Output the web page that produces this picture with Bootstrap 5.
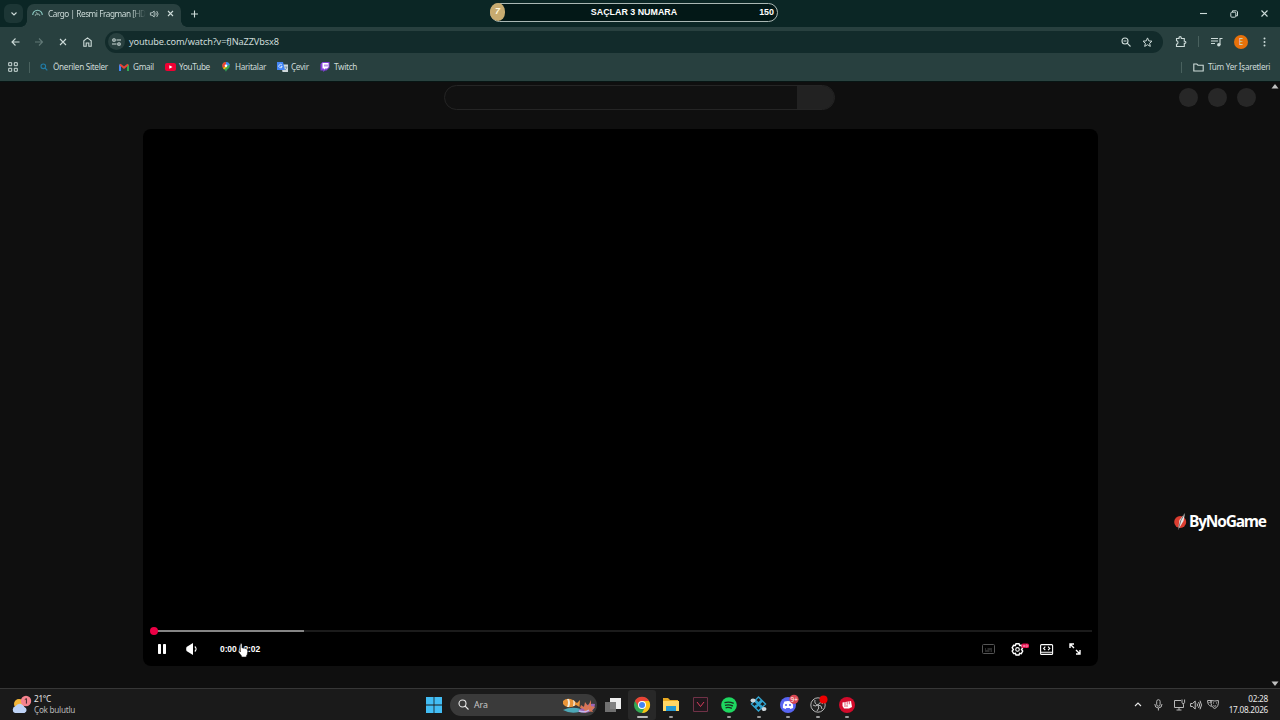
<!DOCTYPE html>
<html lang="tr">
<head>
<meta charset="utf-8">
<title>Cargo | Resmi Fragman [HD]</title>
<link href="https://cdn.jsdelivr.net/npm/bootstrap@5.3.0/dist/css/bootstrap.min.css" rel="stylesheet">
<script src="https://cdn.jsdelivr.net/npm/bootstrap@5.3.0/dist/js/bootstrap.bundle.min.js"></script>
<style>
body{width:1280px;height:720px;background:#0f0f0f;font:8.2px/12px "Noto Sans","Open Sans",sans-serif;color:#cddbd9;fill:none;stroke:currentColor;stroke-width:1.1}
svg{display:block;overflow:visible}
.f{fill:currentColor;stroke:none}
.tracks{display:grid;align-items:center}
.tabstrip{height:27px;background:#0b2625;grid-template-columns:4px 19px 4px 154px 9px 1fr 9px 21px 9px 22px 8px 11px}
.tabsearch{width:19px;height:19px;border-radius:6px;background:#1c3635}
.tab{height:23px;padding-bottom:4px;background:#28403f;border-radius:7px 7px 0 0;grid-template-columns:5px 11px 5px 98px 4px 9px 9px 6px;align-self:end}
.tab:before,.tab:after{content:"";position:absolute;bottom:0;width:6px;height:6px}
.tab:before{left:-6px;background:radial-gradient(circle at 0 0,transparent 5.5px,#28403f 6px)}
.tab:after{right:-6px;background:radial-gradient(circle at 100% 0,transparent 5.5px,#28403f 6px)}
.tabtitle{letter-spacing:-.44px;-webkit-mask:linear-gradient(90deg,#000 85%,transparent);mask:linear-gradient(90deg,#000 85%,transparent)}
.toolbar{height:29px;background:#28403f;grid-template-columns:10px 10px 14px 10px 15px 8px 16px 10px 12px 1058px 12px 12px 11px 1px 12px 12px 11px 14px 15px 4px}
.omni{height:22px;border-radius:11px;background:#122b2b;grid-template-columns:3px 16px 5px 1fr 10px 11px 11px 10px}
.siteinfo{width:17px;height:17px;background:#28403f}
.url{font-size:9.2px;letter-spacing:-.13px}
.bookmarks{height:25px;padding-bottom:2px;letter-spacing:-.31px;background:#28403f;grid-template-columns:8px 10px 11px 1px 10px 8px 5px 66px 10px 4px 32px 10px 4px 43px 8px 5px 42px 10px 4px 29px 10px 4px 1fr 1px 11px 11px 4px 72px;border-bottom:1px solid #29423f}
.vline{width:1px;height:11px;background:#49615e}
.banner{left:490px;top:3px;width:288px;height:19px;border:1.5px solid #aab8b4;border-radius:10px;background:#031817;color:#fff;font:bold 8.9px/17px "Liberation Sans",sans-serif}
.coin{left:-1px;top:-1px;width:15px;height:18px;border-radius:9px 50% 50% 9px;background:#c7ab70;color:#fff8dd}
.page{height:607px;background:#0f0f0f;border-top:1px solid #071514}
.masthead{height:30px;grid-template-columns:444px 391px 1fr 19px 10px 19px 10px 19px 24.5px}
.query{height:25px;border:1px solid #252525;border-radius:13px;background:#111;overflow:hidden}
.querybtn{width:37px;background:#222}
.dot{width:19px;height:19px;background:#272727}
.player{width:955px;height:537px;margin:17px 0 0 143px;background:#000;border-radius:8px;color:#fff}
.seek{height:2px;margin:0 6px 0 10px;background:#1b1b1b}
.loaded{width:151px;height:2px;background:#858585}
.knob{left:-3.5px;top:-3px;width:8px;height:8px;background:#ec0045}
.controls{height:34px;grid-template-columns:15px 8px 20px 12px 22px 1fr 13px 16px 14px 15px 13px 16px 11px 18px}
.time{font:bold 8.5px/12px "Liberation Sans",sans-serif;letter-spacing:-.1px}
.cursor{left:94.5px;top:514px}
.logo{left:1173px;top:511px}
.brand{font:bold 15.5px/20px "Open Sans",sans-serif;color:#fff;letter-spacing:-1.2px;margin-left:1px}
.taskbar{height:32px;background:#1a1a1a;border-top:1px solid #373737;color:#e8e8e8;grid-template-columns:12px 17px 5px 392px 16px 8px 147px 8px 17px 6px 234px 1fr 8px 12px 9px 11px 11px 5px 12px 5px 12px 6px 43px 12px}
.small-lines{line-height:10.5px;letter-spacing:-.27px}
.clock{line-height:10.5px;letter-spacing:-.25px}
.find{height:22px;border-radius:11px;background:#3a3a3a}
.apps{grid-template-columns:28px repeat(7,29.4px)}
.app{height:30px}
.app.on{background:#282828;border-radius:3px}
.app.live:after{content:"";position:absolute;bottom:2px;left:50%;width:4px;height:2px;margin-left:-2px;border-radius:1px;background:#9c9c9c}
.app.on:after{width:11px;margin-left:-5px;background:#bbb}
</style>
</head>
<body class="overflow-hidden position-relative">
<header>
<div class="tabstrip tracks">
 <i></i><div class="tabsearch d-flex align-items-center justify-content-center"><svg width="6" height="4" viewBox="0 0 6 4"><path d="M.5.5 3 3 5.5.5"/></svg></div><i></i>
 <div class="tab tracks position-relative"><i></i>
  <svg width="11" height="11" viewBox="0 0 11 11"><path d="M.7 7A4.8 4.8 0 0 1 10.3 7" stroke="#8bc9c2"/><path d="M3.2 8a2.3 2.3 0 1 1 4.6 0M4 4l2 3" stroke="#7e9995"/></svg><i></i>
  <span class="tabtitle text-nowrap overflow-hidden">Cargo | Resmi Fragman [HD]</span><i></i>
  <svg width="9" height="8" viewBox="0 0 9 8" stroke-width=".8"><path d="M.4 2.8h1.6L4.2 1v6L2 5.2H.4z"/><path d="M5.7 2.5q1.2 1.5 0 3M6.7 1q2.8 3 0 6"/></svg><i></i>
  <svg width="5" height="5" viewBox="0 0 5 5"><path d="m0 0 5 5M5 0 0 5"/></svg>
 </div><i></i>
 <svg width="8" height="8" viewBox="0 0 8 8"><path d="M4.5.5v7M1 4h7"/></svg>
 <svg width="7" height="7" viewBox="0 0 7 7"><path d="M0 3.5h7"/></svg><i></i>
 <svg width="8" height="8" viewBox="0 0 8 8" stroke-width="1"><rect x=".8" y="2.2" width="5" height="5" rx="1"/><path d="M2.5 2V.8h4l1 1v4H6"/></svg><i></i>
 <svg width="7" height="7" viewBox="0 0 7 7"><path d="m.5.5 6 6m0-6-6 6"/></svg><i></i>
</div>
<div class="toolbar tracks"><i></i>
 <svg width="10" height="8" viewBox="0 0 10 8"><path d="M9.5 4h-7M5.5.5 2 4l3.5 3.5"/></svg><i></i>
 <svg width="10" height="8" viewBox="0 0 10 8" color="#617876"><path d="M1 4h7M5 .5 8.5 4 5 7.5"/></svg><i></i>
 <svg width="8" height="8" viewBox="0 0 8 8"><path d="m1 1 6 6m0-6L1 7"/></svg><i></i>
 <svg width="9" height="10" viewBox="0 0 9 10"><path d="M.8 9.2V3.8L4.5.9l3.7 2.9v5.4H5.8V6H3.2v3.2z"/></svg><i></i>
 <div class="omni tracks"><i></i>
  <div class="siteinfo rounded-circle d-flex align-items-center justify-content-center"><svg width="9" height="8" viewBox="0 0 9 8"><circle cx="2" cy="2" r="1.3"/><path d="M4.5 2H9M0 6h4.5"/><circle cx="7" cy="6" r="1.3"/></svg></div><i></i>
  <span class="url">youtube.com/watch?v=fJNaZZVbsx8</span>
  <svg width="10" height="10" viewBox="0 0 10 10"><circle cx="4" cy="4" r="3"/><path d="m6.2 6.2 3.3 3.3M2.5 4h3"/></svg><i></i>
  <svg width="11" height="10" viewBox="0 0 11 10" stroke-width="1"><path d="m5.5.9 1.3 3 3.2.3-2.4 2.1.7 3.1-2.8-1.7-2.8 1.7.7-3.1L1 4.2l3.2-.3z"/></svg><i></i>
 </div><i></i>
 <svg width="12" height="12" viewBox="0 0 12 12"><path d="M1.5 2.5H4V1.8a1 1 0 0 1 2.3 0v.7h3v2.7h.5a1 1 0 0 1 0 2.2h-.5v3.1H1.5V8.2q1.5 0 1.5-1.7t-1.5-1.7z"/></svg><i></i><b class="vline"></b><i></i>
 <svg width="12" height="10" viewBox="0 0 12 10"><path d="M0 1.5h7M0 4h7M0 6.5h4M9 8V1.5h2.5"/><circle class="f" cx="7.8" cy="7.8" r="1.7"/></svg><i></i>
 <div class="rounded-circle text-center" style="width:14px;height:14px;line-height:14px;background:#e8710a">E</div><i></i>
 <svg class="f" width="3" height="10" viewBox="0 0 3 10"><circle cx="1.5" cy="1.5" r="1"/><circle cx="1.5" cy="5" r="1"/><circle cx="1.5" cy="8.5" r="1"/></svg>
</div>
<div class="bookmarks tracks text-nowrap"><i></i>
 <svg width="10" height="10" viewBox="0 0 10 10" stroke-width="1"><path d="M.7.7h3v3h-3zM6.3.7h3v3h-3zM.7 6.3h3v3h-3zM6.3 6.3h3v3h-3z"/></svg><i></i><b class="vline"></b><i></i>
 <svg width="8" height="8" viewBox="0 0 8 8" color="#217da7"><circle cx="3.3" cy="3.3" r="2.3"/><path d="m5 5 2.3 2.3"/></svg><i></i><span>Önerilen Siteler</span>
 <svg width="10" height="8" viewBox="0 0 10 8" stroke-width="2"><path d="M1 8V1.5" stroke="#4285f4"/><path d="M9 8V1.5" stroke="#34a853"/><path d="m1 1.5 4 3.3 4-3.3" stroke="#ea4335"/></svg><i></i><span>Gmail</span>
 <svg width="11" height="8" viewBox="0 0 11 8" stroke="none"><rect width="11" height="8" rx="2" fill="#f00033"/><path d="m4.3 2.2 3.2 1.8-3.2 1.8z" fill="#fff"/></svg><i></i><span>YouTube</span>
 <svg width="8" height="10" viewBox="0 0 8 10" stroke="none"><path d="M4 10C3.5 7.5.2 6.5.2 3.8A3.8 3.8 0 0 1 7.8 3.8C7.8 6.5 4.5 7.5 4 10" fill="#34a853"/><path d="M.2 3.8A3.8 3.8 0 0 1 4 0v4L1 6Q.2 5 .2 3.8" fill="#ea4335"/><path d="M4 0q3 0 3.7 3L4 4z" fill="#4285f4"/><path d="m1 6 3-2 1 1-3 2.5z" fill="#fbbc04"/><circle cx="4" cy="3.8" r="1.3" fill="#fff"/></svg><i></i><span>Haritalar</span>
 <svg width="11" height="10" viewBox="0 0 11 10" stroke="none"><path d="M4 2.5h7V10H5.5z" fill="#cfd8dc"/><path d="M0 0h6l2 8H0z" fill="#4285f4"/><path d="M5 3.2A1.7 1.7 0 1 0 5.2 4.5H3.7" fill="none" stroke="#fff" stroke-width=".7"/><path d="M7.5 5H10.500M9.700 5q0 2-1.700 3" fill="none" stroke="#607d8b" stroke-width=".7"/></svg><i></i><span>Çevir</span>
 <svg width="10" height="10" viewBox="0 0 10 10" stroke="none"><path d="M.5 2 2.500 0h7v5.500L6.500 8.400H5L3.300 10V8.400H.5z" fill="#8440db"/><path d="M2.500 1h6v4L7 6.500H5.300L4 7.800V6.500H2.500z" fill="#fff"/><path d="M5 2.500v2M7 2.500v2" stroke="#8440db"/></svg><i></i><span>Twitch</span>
 <b class="vline"></b><i></i><svg width="11" height="9" viewBox="0 0 11 9"><path d="M.8 1h3l1.200 1.200h5.200V8H.8z"/></svg><i></i><span>Tüm Yer İşaretleri</span>
</div>
</header>
<main class="page position-relative">
 <div class="masthead tracks"><i></i><div class="query d-flex justify-content-end"><div class="querybtn h-100"></div></div><i></i><b class="dot rounded-circle"></b><i></i><b class="dot rounded-circle"></b><i></i><b class="dot rounded-circle"></b></div>
 <section class="player position-relative d-flex flex-column justify-content-end">
  <div class="seek position-relative"><div class="loaded"></div><b class="knob position-absolute rounded-circle"></b></div>
  <div class="controls tracks"><i></i>
   <svg class="f" width="8" height="10" viewBox="0 0 8 10"><rect width="3" height="10" rx=".7"/><rect x="5" width="3" height="10" rx=".7"/></svg><i></i>
   <svg width="12" height="12" viewBox="0 0 12 12"><path class="f" d="M.5 4 7 0v12L.5 8q-.8-2 0-4"/><path d="M8.800 3.500q2.600 2.500 0 5"/></svg><i></i>
   <span class="time">0:00 / 2:02</span>
   <svg width="13" height="10" viewBox="0 0 13 10" color="#555" stroke-width="1"><rect x=".5" y=".5" width="12" height="9" rx="1"/><path d="M3 5h1m1.500 0H10M3 7h4.500m1 0H10"/></svg><i></i>
   <svg width="19" height="13" viewBox="0 0 19 13"><path d="M5 .8h3l.6 1.700 1.700-.2 1.400 2.500L10.500 6.500l1.200 1.600-1.400 2.500-1.700-.3L8 12H5l-.6-1.700-1.800.3-1.400-2.500 1.200-1.600-1.200-1.700 1.400-2.500 1.800.2z" stroke-width="1.4"/><circle cx="6.500" cy="6.400" r="1.800"/><rect x="10.500" y=".6" width="7.500" height="4.500" rx="1.500" fill="#e20b4b" stroke="none"/><path d="M12.300 1.800v2.200m0-1h1.300m0-1.200v2.200M15 1.800v2.200q2 0 2-1.100t-2-1.100" stroke="#ffb0c8" stroke-width=".6"/></svg><i></i>
   <svg width="13" height="11" viewBox="0 0 13 11"><rect x=".6" y=".6" width="12" height="9.800" rx="1"/><path d="M1 8.300h11M5.300 2.600 3.600 4.400l1.700 1.800m2.700-3.600 1.800 1.800L8 6.200"/></svg><i></i>
   <svg width="12" height="12" viewBox="0 0 12 12" stroke-width="1.4"><path d="M1 5V1h4M1 1l4 4M11 7v4H7m4 0L7 7"/></svg>
  </div>
  <svg class="cursor position-absolute" width="10" height="15" viewBox="0 0 10 15" stroke="#111" stroke-width=".5"><path d="M2.400 9V1.500q0-1 .8-1t.8 1V5q1-.6 1.600.3.8-.7 1.500.3 1-.6 1.600.4.8 0 .8 1.200v2.300q0 2-1.200 3.500V14H3.600v-1L.7 9.300Q-.3 7.500 1 7.400q.8.2 1.400 1.600" fill="#fff"/></svg>
 </section>
 <svg class="position-absolute f" style="left:1271px;top:2px;color:#c0c0c0" width="8" height="5" viewBox="0 0 8 5"><path d="M4 0 7.500 4.500H.5z"/></svg>
 <svg class="position-absolute f" style="left:1271px;top:599px;color:#c0c0c0" width="8" height="5" viewBox="0 0 8 5"><path d="M4 5 7.500.5H.5z"/></svg>
</main>
<footer class="taskbar tracks"><i></i>
 <svg width="19" height="20" viewBox="0 0 19 20" stroke="none"><circle cx="7" cy="9" r="5" fill="#f4b638"/><path d="M3 18a3.500 3.500 0 0 1 .5-6.700 5 5 0 0 1 9 .7 3.200 3.200 0 0 1 0 6z" fill="#bdd2f5"/><circle cx="14" cy="6" r="5.200" fill="#f4828d"/><path d="m12.800 4.600 1.600-1v5" stroke="#2e1e21" stroke-width=".9" fill="none"/></svg><i></i>
 <div class="small-lines"><div>21°C</div><div style="color:#b9b9b9">Çok bulutlu</div></div>
 <svg width="16" height="16" viewBox="0 0 16 16" stroke="none"><path d="M0 0h7.600v7.600H0zM8.400 0H16v7.600H8.400zM0 8.400h7.600V16H0zM8.400 8.400H16V16H8.400z" fill="#42bdf4"/></svg><i></i>
 <div class="find d-flex align-items-center">
  <svg class="ms-2" width="11" height="11" viewBox="0 0 11 11"><circle cx="4.500" cy="4.500" r="3.500"/><path d="m7 7 3.500 3.500"/></svg>
  <span class="ms-1 me-auto" style="padding-left:1px;color:#c6c6c6;font-size:8.800px">Ara</span>
  <svg width="36" height="18" viewBox="0 0 36 18" stroke="none"><path d="M2 14q8-4 18-1l-2 3q-9 2-16-2" fill="#4da9b8"/><path d="M2 5q4-4 10-1l4 3 3-3-.5 7L15 9q-6 4-11 1L2 8z" fill="#e99438"/><path d="M6 3q2 3 0 8h2q2-4 0-8zM12 4q1 3 0 6h1.500q1-3 0-5z" fill="#f2eadb"/><path d="M17 15Q27 6 34 8q0 8-10 9z" fill="#9b65b7"/><path d="m20 9 3 2 1-5 3 4 3-6v6l4 1-3 3 1 2-5-1-3 2-1-4-4-1z" fill="#d87556"/><path d="M18 15q6 2 10-1" fill="none" stroke="#c4b7ed" stroke-width="1.500"/></svg>
 </div><i></i>
 <svg width="17" height="16" viewBox="0 0 17 16" stroke="none"><path d="M5 1h11v11H5z" fill="#eee"/><path d="M0 5h11v10H0z" fill="#777" fill-opacity=".92"/></svg><i></i>
 <div class="apps tracks">
  <div class="app on live position-relative d-flex align-items-center justify-content-center"><svg width="16" height="16" viewBox="0 0 16 16" stroke="none"><circle cx="8" cy="8" r="8" fill="#34a853"/><path d="M1 4a8 8 0 0 1 14 0L8 8z" fill="#ea4335"/><path d="M15 4a8 8 0 0 1-7 12l3.200-6.200L8 4z" fill="#fbc116"/><path d="m1 4 3.800 6L8 4z" fill="#ea4335"/><circle cx="8" cy="8" r="4" fill="#fff"/><circle cx="8" cy="8" r="3" fill="#4285f4"/></svg></div>
  <div class="app live position-relative d-flex align-items-center justify-content-center"><svg width="17" height="15" viewBox="0 0 17 15" stroke="none"><path d="M1 1h5l2 2h8v11H1z" fill="#e9a921"/><path d="M1 4h16v10H1z" fill="#ffd665"/><path d="M4 9h10v5H4z" fill="#2499d3"/></svg></div>
  <div class="app position-relative d-flex align-items-center justify-content-center"><svg width="15" height="15" viewBox="0 0 15 15" stroke="#703247" stroke-width="1"><path d="M.5.5h14v14H.5z" fill="#20171c"/><path d="m4 5 3.500 4.500L11 5" stroke="#db3c5b"/></svg></div>
  <div class="app live position-relative d-flex align-items-center justify-content-center"><svg width="16" height="16" viewBox="0 0 16 16"><circle cx="8" cy="8" r="7.800" fill="#1ed760" stroke="none"/><path d="M3.500 5.600q5-1.300 9.200.8M4 8.300q4-1.200 7.800.7M4.600 10.800q3-1 6.200.6" stroke="#17321f" stroke-width="1.400"/></svg></div>
  <div class="app live position-relative d-flex align-items-center justify-content-center"><svg width="17" height="17" viewBox="0 0 17 17"><path d="m8.500 1 3 3-3 3-3-3zm4 4 3 3-3 3-3-3zm-8 0 3 3-3 3-3-3zm4 4 3 3-3 3-3-3z" stroke="#31a5d2" stroke-width="1.400"/><ellipse cx="3" cy="4.500" rx="2.500" ry="2" fill="#ced6db" stroke="none"/><ellipse cx="14" cy="13" rx="2.500" ry="2" fill="#ced6db" stroke="none"/></svg></div>
  <div class="app live position-relative d-flex align-items-center justify-content-center"><svg width="16" height="16" viewBox="0 0 16 16" stroke="none"><circle cx="8" cy="8" r="8" fill="#5865f2"/><path d="M4.400 4.500Q8 3.400 11.600 4.500q1.800 3 1.500 6.400l-2.700 1.200-.8-1.200H6.400l-.8 1.200-2.700-1.200q-.3-3.400 1.500-6.400" fill="#fff"/><circle cx="6" cy="8" r="1.100" fill="#5865f2"/><circle cx="10" cy="8" r="1.100" fill="#5865f2"/><circle cx="14" cy="2.300" r="4.600" fill="#d84753"/><text x="10.600" y="4.700" fill="#fff" font-size="6.300">9+</text></svg></div>
  <div class="app live position-relative d-flex align-items-center justify-content-center"><svg width="16" height="16" viewBox="0 0 16 16" stroke="#b6b6b6" stroke-width="1"><circle cx="8" cy="8" r="7.200" fill="#222"/><path d="M8 8q-4-1-3-5M8 8q2-4 5-1M8 8q2 3-1 6M8 8q-3 2-5 0M8 8q4 0 4 4"/><circle cx="13.500" cy="2.500" r="4" fill="#f00000" stroke="none"/></svg></div>
  <div class="app live position-relative d-flex align-items-center justify-content-center"><svg width="16" height="16" viewBox="0 0 16 16" stroke="none"><circle cx="8" cy="8" r="8" fill="#d20b2b"/><path d="M3.500 5.500 12 4l1 6-3 1.600H5L3.500 9z" fill="#fff"/><path d="M6 5v3M8.200 4.600v3M10.300 4.300v3M5 9h4" stroke="#d20b2b" stroke-width=".7"/></svg></div>
 </div><i></i>
 <svg width="8" height="5" viewBox="0 0 8 5"><path d="M1 4 4 1l3 3"/></svg><i></i>
 <svg width="9" height="12" viewBox="0 0 9 12" stroke-width="1" color="#b8b8b8"><rect x="2.700" y=".7" width="3.400" height="6.500" rx="1.700"/><path d="M.8 5q0 4 3.600 4T8 5M4.400 9v2.500"/></svg><i></i>
 <svg width="11" height="12" viewBox="0 0 11 12" stroke-width="1" color="#b8b8b8"><path d="M7 1.500H.5v7h9V6M5 8.500V11M2.500 11h5M8 .5v3q0 1 1.300 1t1.300-1v-3M9.300 4v2"/></svg><i></i>
 <svg width="12" height="10" viewBox="0 0 12 10" stroke-width="1" color="#c4c4c4"><path d="M.6 3.500h2L5.200 1v8L2.600 6.500h-2zM7 3.500q1 1.500 0 3M8.600 2q2 3 0 6M10 .7q3 4.300 0 8.600"/></svg><i></i>
 <svg width="12" height="11" viewBox="0 0 12 11" stroke-width="1" color="#b8b8b8"><path d="M4 4V1.500H.6q-.4 4.500 3.900 6M4 1.500q4 1 7.400 0Q12 7.800 7.700 9.500 3.600 8 4 1.500M6 4h1m2 0h1M6.300 6.700q1.400 1 2.800 0M1.500 3.500h1"/></svg><i></i>
 <div class="clock text-end text-nowrap"><div>02:28</div><div>17.08.2026</div></div><i></i>
</footer>
<div class="banner position-absolute text-center"><b class="coin position-absolute fst-italic">7</b><span>SAÇLAR 3 NUMARA</span><span class="position-absolute end-0" style="margin-right:3px">150</span></div>
<div class="logo position-absolute d-flex align-items-center">
 <svg width="15" height="19" viewBox="0 0 15 19" stroke="none"><circle cx="7.200" cy="10" r="6" fill="#db3d30"/><path d="M5 18 6.500 8 12 1l-1.500 8z" fill="#e8e8e8"/><path d="M5 18 8 8l4-7" fill="none" stroke="#29201f" stroke-width=".6"/></svg>
 <span class="brand">ByNoGame</span>
</div>
</body>
</html>
